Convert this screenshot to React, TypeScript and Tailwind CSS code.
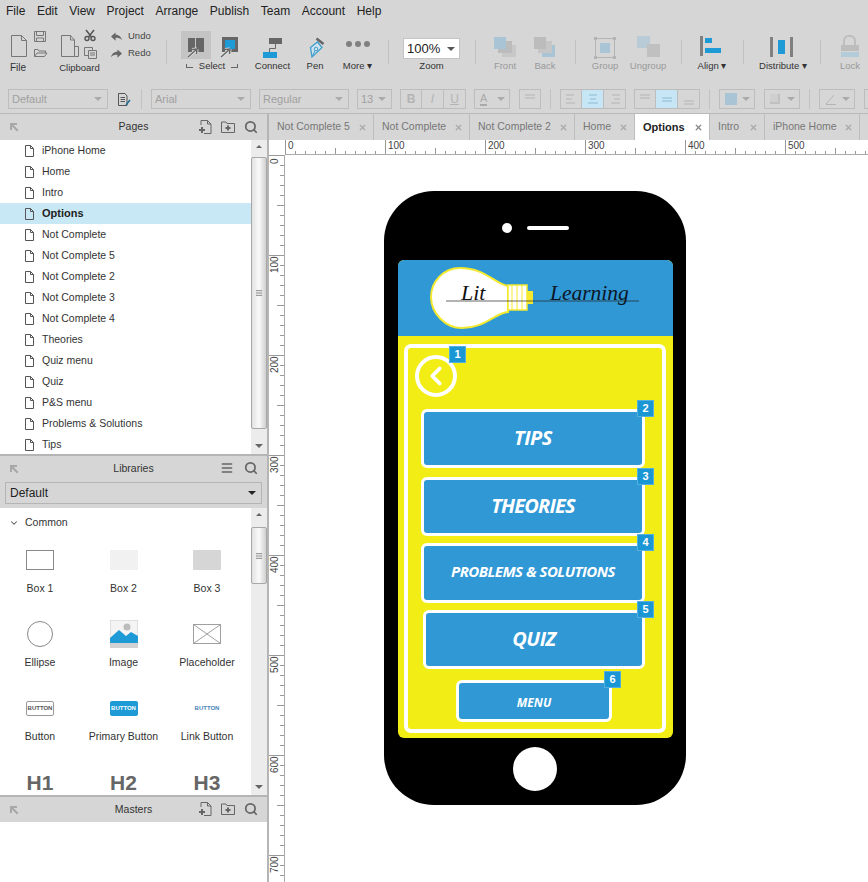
import type { ReactNode } from 'react';
import { ChevronDown, Search, Menu, X, ChevronLeft } from 'lucide-react';

const PAGES = ['iPhone Home', 'Home', 'Intro', 'Options', 'Not Complete', 'Not Complete 5', 'Not Complete 2', 'Not Complete 3', 'Not Complete 4', 'Theories', 'Quiz menu', 'Quiz', 'P&S menu', 'Problems & Solutions', 'Tips'];
const MENU = ['File', 'Edit', 'View', 'Project', 'Arrange', 'Publish', 'Team', 'Account', 'Help'];
const TABS = [
  { name: 'Not Complete 5', w: 'w-[105px]' },
  { name: 'Not Complete', w: 'w-[96px]' },
  { name: 'Not Complete 2', w: 'w-[105px]' },
  { name: 'Home', w: 'w-[60px]' },
  { name: 'Options', w: 'w-[75px]', active: true },
  { name: 'Intro', w: 'w-[55px]' },
  { name: 'iPhone Home', w: 'w-[95px]' },
];

function Sep({ className }: { className: string }) {
  return <div className={`w-px h-[24px] mt-[18px] bg-[#c2c2c2] shrink-0 ${className}`} />;
}

function Tool({ className, label, dim, labelClass = '', children }: { className: string; label: string; dim?: boolean; labelClass?: string; children: ReactNode }) {
  return (
    <div className={`flex flex-col items-center shrink-0 ${className}`}>
      <div className="h-[37px] w-full flex justify-center">{children}</div>
      <div className={`text-[9.5px] leading-[14px] whitespace-nowrap ${dim ? 'text-[#999]' : 'text-[#333]'} ${labelClass}`}>{label}</div>
    </div>
  );
}

function PageIcon({ className = 'w-[9px] h-[12px]' }: { className?: string }) {
  return (
    <svg viewBox="0 0 9 12" className={className} fill="none" stroke="#555" strokeWidth="1">
      <path d="M0.5 0.5H5.5L8.5 3.5V11.5H0.5Z M5.5 0.5V3.5H8.5" />
    </svg>
  );
}

function HeaderActions() {
  return (
    <div className="flex items-center gap-[9px] text-[#666]">
      <svg viewBox="0 0 14 14" className="w-[14px] h-[14px]" fill="none" stroke="#666" strokeWidth="1">
        <path d="M3 5V0.5H9.5L13 4V13.5H6M9.5 0.5V4H13" />
        <path d="M4 7V13M1 10H7" strokeWidth="2" />
      </svg>
      <svg viewBox="0 0 14 12" className="w-[14px] h-[12px]" fill="none" stroke="#666" strokeWidth="1">
        <path d="M0.5 11.5V1H5L6 2.5H13.5V11.5Z" />
        <path d="M7 4.5V9.5M4.5 7H9.5" strokeWidth="2" />
      </svg>
      <Search className="w-[14px] h-[14px]" strokeWidth={3} />
    </div>
  );
}

function PinIcon() {
  return (
    <svg viewBox="0 0 9 9" className="w-[9px] h-[9px]" fill="#a8a8a8">
      <path d="M0 0H7V2H3.5L8.5 7L7 8.5L2 3.5V7H0Z" />
    </svg>
  );
}

function Select({ className, label }: { className: string; label: string }) {
  return (
    <div className={`h-[20px] border border-[#bdbdbd] flex items-center justify-between pl-[3px] pr-[5px] shrink-0 text-[#a0a0a0] text-[11px] ${className}`}>
      <span>{label}</span>
      <span className="w-0 h-0 border-x-[4px] border-x-transparent border-t-[4px] border-t-[#aaa]" />
    </div>
  );
}

function FmtBtn({ on, children }: { on?: boolean; children?: ReactNode }) {
  return (
    <div className={`w-[22px] h-[20px] flex items-center justify-center border border-l-0 first:border-l border-[#bdbdbd] shrink-0 ${on ? 'bg-[#c6e6f6]' : ''}`}>
      {children}
    </div>
  );
}

function Lines({ kind }: { kind: 'l' | 'c' | 'r' | 't' | 'm' | 'b' }) {
  const blue = kind === 'c' || kind === 'm';
  const stroke = blue ? '#8cb9cf' : '#b4b4b4';
  if (kind === 't' || kind === 'm' || kind === 'b') {
    const y = kind === 't' ? 2 : kind === 'm' ? 5 : 8;
    return (
      <svg viewBox="0 0 12 12" className="w-[12px] h-[12px]" stroke={stroke} strokeWidth="1.2">
        <path d={`M1 ${y}H11M1 ${y + 3}H11`} />
      </svg>
    );
  }
  const a = kind === 'l' ? 'M1 2H9M1 6H7M1 10H10' : kind === 'c' ? 'M2 2H10M3 6H9M1 10H11' : 'M3 2H11M5 6H11M2 10H11';
  return (
    <svg viewBox="0 0 12 12" className="w-[12px] h-[12px]" stroke={stroke} strokeWidth="1.2">
      <path d={a} />
    </svg>
  );
}

function Swatch({ className, children }: { className: string; children: ReactNode }) {
  return (
    <div className={`h-[20px] w-[36px] border border-[#bdbdbd] flex items-center justify-between pl-[5px] pr-[4px] shrink-0 ${className}`}>
      {children}
      <span className="w-0 h-0 border-x-[4px] border-x-transparent border-t-[4px] border-t-[#aaa]" />
    </div>
  );
}

function Toolbar() {
  return (
    <div className="h-[62px] flex shrink-0">
      <Tool className="ml-[6px] w-[44px] !items-start" label="File" labelClass="mt-[2px] ml-[4px] text-[10px]">
        <svg width="44" height="37" viewBox="6 22 44 37" fill="none" stroke="#777" strokeWidth="1">
          <path d="M11.5 35.5H21.5L26.5 40.5V56.5H11.5Z M21.5 35.5V40.5H26.5" />
          <path d="M34.5 31.5H45.5V41.5H34.5Z M36.5 31.5V35.5H43.5V31.5M36.5 41.5V38H43.5V41.5" />
          <path d="M34.5 56.5V49.5H38L39 51H45.5V53M34.5 56.5H44.5L47 53H37Z" />
        </svg>
      </Tool>
      <Tool className="ml-[6px] w-[47px]" label="Clipboard" labelClass="mt-[2px]">
        <svg width="47" height="37" viewBox="56 22 47 37" fill="none" stroke="#777" strokeWidth="1">
          <path d="M61.5 35.5H70.5L74.5 40V56.5H61.5Z M70.5 35.5V40H74.5" />
          <path d="M74.5 46.5H78.5V56.5H74.5" />
          <circle cx="87" cy="38.5" r="2" stroke="#555" strokeWidth="1.4" />
          <circle cx="93" cy="38.5" r="2" stroke="#555" strokeWidth="1.4" />
          <path d="M86 30L91.5 37M94 30L88.5 37" stroke="#555" strokeWidth="1.5" />
          <path d="M84.5 47.5H92.5V50M88.5 50.5H96.5V58.5H88.5ZM88.5 55.5H84.5V47.5M90 53H95M90 55H95" />
        </svg>
      </Tool>
      <div className="ml-[8px] w-[44px] pt-[7px] flex flex-col gap-[3px] shrink-0">
        <div className="flex items-center gap-[6px] h-[14px]">
          <svg viewBox="0 0 12 9" className="w-[11px] h-[9px]" fill="#666"><path d="M0 4.5L5 0V2.5C8 2.5 11 4 12 8.5C10 6 8 5.8 5 5.8V9Z" /></svg>
          <span className="text-[9.5px] text-[#444]">Undo</span>
        </div>
        <div className="flex items-center gap-[6px] h-[14px]">
          <svg viewBox="0 0 12 9" className="w-[11px] h-[9px]" fill="#666"><path d="M12 4.5L7 0V2.5C4 2.5 1 4 0 8.5C2 6 4 5.8 7 5.8V9Z" /></svg>
          <span className="text-[9.5px] text-[#444]">Redo</span>
        </div>
      </div>
      <Sep className="ml-[11px]" />
      <div className="ml-[14px] w-[62px] shrink-0 flex flex-col">
        <svg width="62" height="37" viewBox="181 22 62 37">
          <rect x="181" y="31" width="30" height="28" fill="#c4c4c4" />
          <rect x="188" y="38" width="7" height="14" fill="#666" />
          <rect x="196" y="38" width="8" height="14" fill="#666" />
          <path d="M188 57L197 49M197 49L192 49.5M197 49L196.5 54" stroke="#e4e4e4" strokeWidth="3" fill="none" />
          <path d="M188 57L197 49M197 49L192 49.5M197 49L196.5 54" stroke="#666" strokeWidth="1.5" fill="none" />
          <rect x="222" y="37" width="16" height="15" fill="#666" />
          <rect x="225" y="40" width="10" height="9" fill="#1e9ad6" />
          <path d="M221 57L230 49M230 49L225 49.5M230 49L229.5 54" stroke="#e4e4e4" strokeWidth="3" fill="none" />
          <path d="M221 57L230 49M230 49L225 49.5M230 49L229.5 54" stroke="#666" strokeWidth="1.5" fill="none" />
        </svg>
        <div className="flex items-center justify-between text-[9.5px] leading-[14px] text-[#333] px-[5px]">
          <span className="w-[7px] h-[4px] border-l border-b border-[#666]" />
          <span>Select</span>
          <span className="w-[7px] h-[4px] border-r border-b border-[#666]" />
        </div>
      </div>
      <Tool className="ml-[12px] w-[35px]" label="Connect">
        <svg width="35" height="37" viewBox="255 22 35 37">
          <rect x="269" y="38" width="13" height="6" fill="#666" />
          <path d="M275.5 44V48.5H269.5V52" stroke="#666" fill="none" />
          <rect x="263" y="52" width="14" height="6" fill="#1e9ad6" />
        </svg>
      </Tool>
      <Tool className="ml-[10px] w-[30px]" label="Pen">
        <svg width="30" height="37" viewBox="300 22 30 37" fill="none">
          <path d="M312 57L310.5 47.5L317.5 42L322 47.5Z" stroke="#3f9fcc" strokeWidth="1.3" fill="#cfe3ee" />
          <circle cx="316" cy="49" r="1.8" stroke="#3f9fcc" />
          <path d="M312 57L315 50.5" stroke="#3f9fcc" />
          <path d="M316.5 38.5L323.5 44" stroke="#666" strokeWidth="2.5" />
        </svg>
      </Tool>
      <Tool className="ml-[10px] w-[35px]" label="More ▾">
        <div className="flex gap-[3px] pt-[19px]">
          <span className="w-[6px] h-[6px] rounded-full bg-[#808080]" />
          <span className="w-[6px] h-[6px] rounded-full bg-[#808080]" />
          <span className="w-[6px] h-[6px] rounded-full bg-[#808080]" />
        </div>
      </Tool>
      <Sep className="ml-[13px]" />
      <div className="ml-[14px] w-[57px] shrink-0 flex flex-col items-center">
        <div className="mt-[16px] h-[21px] w-[57px] bg-white border border-[#c4c4c4] flex items-center justify-between pl-[3px] pr-[4px] text-[13px] text-[#222]">
          <span>100%</span>
          <span className="w-0 h-0 border-x-[4px] border-x-transparent border-t-[4px] border-t-[#555]" />
        </div>
        <div className="text-[9.5px] leading-[14px] text-[#333]">Zoom</div>
      </div>
      <Sep className="ml-[15px]" />
      <Tool className="ml-[14px] w-[30px]" label="Front" dim>
        <svg width="30" height="37" viewBox="490 22 30 37">
          <rect x="502" y="45" width="14" height="12" fill="#c8c8c8" />
          <rect x="498" y="41" width="14" height="12" fill="#bcbcbc" />
          <rect x="494" y="37" width="12" height="12" fill="#a9c4d4" />
        </svg>
      </Tool>
      <Tool className="ml-[10px] w-[30px]" label="Back" dim>
        <svg width="30" height="37" viewBox="530 22 30 37">
          <rect x="542" y="45" width="13" height="12" fill="#a9c4d4" />
          <rect x="538" y="41" width="14" height="12" fill="#c6c6c6" />
          <rect x="534" y="37" width="12" height="12" fill="#bcbcbc" />
        </svg>
      </Tool>
      <Sep className="ml-[15px]" />
      <Tool className="ml-[14px] w-[30px]" label="Group" dim>
        <svg width="30" height="37" viewBox="590 22 30 37">
          <rect x="595.5" y="38.5" width="19" height="19" fill="none" stroke="#b4b4b4" />
          <rect x="594" y="37" width="3" height="3" fill="#b4b4b4" />
          <rect x="613" y="37" width="3" height="3" fill="#b4b4b4" />
          <rect x="594" y="56" width="3" height="3" fill="#b4b4b4" />
          <rect x="613" y="56" width="3" height="3" fill="#b4b4b4" />
          <rect x="600" y="43" width="10" height="10" fill="#a9c4d4" />
        </svg>
      </Tool>
      <Tool className="ml-[10px] w-[36px]" label="Ungroup" dim>
        <svg width="36" height="37" viewBox="630 22 36 37">
          <rect x="637" y="36" width="13" height="12" fill="#b9cbd6" />
          <rect x="647" y="44" width="13" height="13" fill="#c0c0c0" />
        </svg>
      </Tool>
      <Sep className="ml-[15px]" />
      <Tool className="ml-[14px] w-[32px]" label="Align ▾">
        <svg width="32" height="37" viewBox="696 22 32 37">
          <rect x="700" y="36" width="3" height="20" fill="#808080" />
          <rect x="705" y="38" width="7" height="5" fill="#1e9ad6" />
          <rect x="705" y="48" width="16" height="5" fill="#1e9ad6" />
        </svg>
      </Tool>
      <Sep className="ml-[15px]" />
      <Tool className="ml-[14px] w-[50px]" label="Distribute ▾">
        <svg width="50" height="37" viewBox="758 22 50 37">
          <rect x="770" y="37" width="3" height="20" fill="#808080" />
          <rect x="790" y="37" width="3" height="20" fill="#808080" />
          <rect x="778" y="40" width="7" height="14" fill="#1e9ad6" />
        </svg>
      </Tool>
      <Sep className="ml-[12px]" />
      <Tool className="ml-[14px] w-[30px]" label="Lock" dim>
        <svg width="30" height="37" viewBox="835 22 30 37" fill="none">
          <path d="M844 45V41C844 34 855 34 855 41V45" stroke="#bdbdbd" strokeWidth="2" />
          <rect x="841" y="45" width="18" height="6" fill="#bdbdbd" />
          <rect x="841" y="52" width="18" height="5" fill="#b4cbd9" />
        </svg>
      </Tool>
    </div>
  );
}

function FormatBar() {
  return (
    <div className="h-[30px] pt-[5px] flex items-start border-b border-[#b9b9b9] shrink-0 overflow-hidden">
      <Select className="ml-[8px] w-[100px]" label="Default" />
      <svg viewBox="0 0 14 13" className="w-[14px] h-[13px] ml-[9px] mt-[4px] shrink-0" fill="none" stroke="#555">
        <path d="M1.5 0.5H8L10 3V12.5H1.5Z M3.5 4.5H8M3.5 6.5H8M3.5 8.5H8" />
        <path d="M9 12L13 7" stroke="#1e6e96" strokeWidth="1.5" />
      </svg>
      <div className="w-px h-[20px] ml-[10px] bg-[#c2c2c2] shrink-0" />
      <Select className="ml-[9px] w-[100px]" label="Arial" />
      <Select className="ml-[8px] w-[90px]" label="Regular" />
      <Select className="ml-[8px] w-[35px]" label="13" />
      <div className="flex ml-[8px]">
        <FmtBtn><span className="text-[12px] font-bold text-[#b4b4b4]">B</span></FmtBtn>
        <FmtBtn><span className="text-[12px] italic text-[#b4b4b4]">I</span></FmtBtn>
        <FmtBtn><span className="text-[12px] underline text-[#b4b4b4]">U</span></FmtBtn>
      </div>
      <Swatch className="ml-[8px]">
        <span className="text-[11px] leading-[11px] text-[#aaa] border-b-2 border-[#aaa]">A</span>
      </Swatch>
      <div className="ml-[9px] w-[22px] h-[20px] border border-[#bdbdbd] flex items-center justify-center shrink-0">
        <Lines kind="t" />
      </div>
      <div className="w-px h-[20px] ml-[9px] bg-[#c2c2c2] shrink-0" />
      <div className="flex ml-[9px]">
        <FmtBtn><Lines kind="l" /></FmtBtn>
        <FmtBtn on><Lines kind="c" /></FmtBtn>
        <FmtBtn><Lines kind="r" /></FmtBtn>
      </div>
      <div className="flex ml-[8px]">
        <FmtBtn><Lines kind="t" /></FmtBtn>
        <FmtBtn on><Lines kind="m" /></FmtBtn>
        <FmtBtn><Lines kind="b" /></FmtBtn>
      </div>
      <div className="w-px h-[20px] ml-[9px] bg-[#c2c2c2] shrink-0" />
      <Swatch className="ml-[9px]"><span className="w-[12px] h-[12px] bg-[#a9c4d4]" /></Swatch>
      <Swatch className="ml-[9px]"><span className="w-[10px] h-[10px] bg-[#cfcfcf] border-r-2 border-b-2 border-[#c0c0c0]" /></Swatch>
      <div className="w-px h-[20px] ml-[9px] bg-[#c2c2c2] shrink-0" />
      <Swatch className="ml-[9px]">
        <svg viewBox="0 0 12 12" className="w-[12px] h-[12px]" stroke="#b4b4b4" fill="none"><path d="M1 11L9 2M1 11.5H11" /></svg>
      </Swatch>
      <div className="ml-[9px] w-[22px] h-[20px] border border-[#bdbdbd] shrink-0" />
    </div>
  );
}

function ScrollTrack({ className, thumb }: { className: string; thumb: string }) {
  return (
    <div className={`w-[16px] bg-[#ececec] flex flex-col items-center shrink-0 relative ${className}`}>
      <span className="mt-[5px] w-0 h-0 border-x-[3px] border-x-transparent border-b-[3px] border-b-[#666]" />
      <div className={`absolute left-0 w-[16px] rounded-[2px] border border-[#a8a8a8] bg-gradient-to-r from-[#e2e2e2] via-[#fafafa] to-[#d0d0d0] flex items-center justify-center ${thumb}`}>
        <Menu className="w-[8px] h-[8px] text-[#555]" strokeWidth={2} />
      </div>
      <span className="mt-auto mb-[6px] w-0 h-0 border-x-[4px] border-x-transparent border-t-[4px] border-t-[#666]" />
    </div>
  );
}

function PagesPanel() {
  return (
    <>
      <div className="h-[26px] bg-[#d6d6d6] relative flex items-center justify-center shrink-0">
        <div className="absolute left-[10px] top-[9px]"><PinIcon /></div>
        <span className="text-[10.5px] text-[#333]">Pages</span>
        <div className="absolute right-[9px] top-[6px]"><HeaderActions /></div>
      </div>
      <div className="h-[314px] flex shrink-0 overflow-hidden">
        <div className="flex-1">
          {PAGES.map(p => (
            <div key={p} className={`h-[21px] flex items-center pl-[25px] gap-[8px] ${p === 'Options' ? 'bg-[#c9e8f5] font-bold text-[11px] text-[#222]' : 'text-[10.5px] text-[#333]'}`}>
              <PageIcon />
              <span>{p}</span>
            </div>
          ))}
        </div>
        <ScrollTrack className="h-[314px]" thumb="top-[17px] h-[272px]" />
      </div>
    </>
  );
}

function LibCell({ label, children }: { label: string; children: ReactNode }) {
  return (
    <div className="h-[74px] flex flex-col items-center">
      <div className="h-[38px] flex items-center justify-center">{children}</div>
      <div className="text-[10.5px] leading-[14px] mt-[2px] text-[#333] whitespace-nowrap">{label}</div>
    </div>
  );
}

function LibrariesPanel() {
  return (
    <>
      <div className="h-[2px] bg-[#b5b5b5] shrink-0" />
      <div className="h-[52px] bg-[#d6d6d6] relative shrink-0">
        <div className="h-[26px] flex items-center justify-center relative">
          <div className="absolute left-[10px] top-[9px]"><PinIcon /></div>
          <span className="text-[10.5px] text-[#333]">Libraries</span>
          <Menu className="absolute right-[33px] top-[5px] w-[14px] h-[14px] text-[#666]" strokeWidth={2.5} />
          <Search className="absolute right-[9px] top-[5px] w-[14px] h-[14px] text-[#666]" strokeWidth={3} />
        </div>
        <div className="mx-[5px] h-[22px] border border-[#b5b5b5] flex items-center justify-between pl-[4px] pr-[5px] text-[12px] text-[#222]">
          <span>Default</span>
          <span className="w-0 h-0 border-x-[4px] border-x-transparent border-t-[4px] border-t-[#222]" />
        </div>
      </div>
      <div className="h-[287px] flex shrink-0 overflow-hidden">
        <div className="flex-1 overflow-hidden">
          <div className="h-[30px] flex items-center pl-[9px] gap-[6px] text-[10.5px] text-[#333]">
            <ChevronDown className="w-[10px] h-[10px] text-[#555]" strokeWidth={2.5} />
            <span>Common</span>
          </div>
          <div className="grid grid-cols-[80px_87px_80px] mt-[3px]">
            <LibCell label="Box 1"><div className="w-[28px] h-[20px] border border-[#888]" /></LibCell>
            <LibCell label="Box 2"><div className="w-[28px] h-[20px] bg-[#f1f1f1]" /></LibCell>
            <LibCell label="Box 3"><div className="w-[28px] h-[20px] bg-[#d6d6d6]" /></LibCell>
            <LibCell label="Ellipse"><div className="w-[26px] h-[26px] rounded-full border border-[#888]" /></LibCell>
            <LibCell label="Image">
              <svg viewBox="0 0 28 28" className="w-[28px] h-[28px]">
                <rect width="28" height="28" fill="#f4f4f4" stroke="#ccc" />
                <circle cx="17" cy="7" r="3.5" fill="#bcbcbc" />
                <path d="M0 18L9 10L16 16L21 12L28 16V24H0Z" fill="#1e9ad6" />
                <rect y="23" width="28" height="5" fill="#d2d2d2" />
              </svg>
            </LibCell>
            <LibCell label="Placeholder">
              <svg viewBox="0 0 28 20" className="w-[28px] h-[20px]" fill="none" stroke="#888" strokeWidth="0.8">
                <path d="M0.5 0.5H27.5V19.5H0.5Z M0.5 0.5L27.5 19.5M27.5 0.5L0.5 19.5" />
              </svg>
            </LibCell>
            <LibCell label="Button">
              <div className="w-[28px] h-[15px] border border-[#999] rounded-[2px] text-[6px] font-bold text-[#555] flex items-center justify-center">BUTTON</div>
            </LibCell>
            <LibCell label="Primary Button">
              <div className="w-[28px] h-[15px] bg-[#1e9ad6] rounded-[2px] text-[6px] font-bold text-white flex items-center justify-center">BUTTON</div>
            </LibCell>
            <LibCell label="Link Button">
              <div className="w-[28px] h-[15px] text-[6px] font-bold text-[#4a86b8] flex items-center justify-center">BUTTON</div>
            </LibCell>
            <LibCell label=""><span className="text-[21px] leading-none font-bold text-[#666]">H1</span></LibCell>
            <LibCell label=""><span className="text-[21px] leading-none font-bold text-[#666]">H2</span></LibCell>
            <LibCell label=""><span className="text-[21px] leading-none font-bold text-[#666]">H3</span></LibCell>
          </div>
        </div>
        <ScrollTrack className="h-[287px]" thumb="top-[19px] h-[57px]" />
      </div>
    </>
  );
}

function MastersPanel() {
  return (
    <>
      <div className="h-[2px] bg-[#b5b5b5] shrink-0" />
      <div className="h-[25px] bg-[#d6d6d6] relative flex items-center justify-center shrink-0">
        <div className="absolute left-[10px] top-[9px]"><PinIcon /></div>
        <span className="text-[10.5px] text-[#333]">Masters</span>
        <div className="absolute right-[9px] top-[5px]"><HeaderActions /></div>
      </div>
    </>
  );
}

function Rulers() {
  const hTicks = Array.from({ length: 59 }, (_, i) => i * 10);
  const vTicks = Array.from({ length: 73 }, (_, i) => i * 10);
  return (
    <>
      <svg width="583" height="15" className="absolute left-[16px] top-0 bg-white">
        {hTicks.map(t => (
          <line key={t} x1={t + 0.5} x2={t + 0.5} y1={t % 100 === 0 ? 0 : t % 50 === 0 ? 8 : 11} y2="15" stroke="#999" />
        ))}
        {[0, 100, 200, 300, 400, 500].map(t => (
          <text key={t} x={t + 3} y="9" fontSize="10" fill="#444" fontFamily="Liberation Sans">{t}</text>
        ))}
        <line x1="0" x2="583" y1="14.5" y2="14.5" stroke="#aaa" />
      </svg>
      <svg width="16" height="727" className="absolute left-0 top-[15px] bg-white">
        {vTicks.map(t => (
          <line key={t} y1={t + 0.5} y2={t + 0.5} x1={t % 100 === 0 ? 0 : t % 50 === 0 ? 8 : 11} x2="16" stroke="#999" />
        ))}
        {[0, 100, 200, 300, 400, 500, 600, 700].map(t => (
          <text key={t} transform={`translate(9 ${t + (t === 0 ? 9 : 18)}) rotate(-90)`} fontSize="10" fill="#444" fontFamily="Liberation Sans">{t}</text>
        ))}
        <line x1="15.5" x2="15.5" y1="0" y2="727" stroke="#aaa" />
      </svg>
    </>
  );
}

function Badge({ n, className }: { n: number; className: string }) {
  return (
    <div className={`absolute w-[17px] h-[17px] bg-[#1a96d4] border border-white/25 text-white text-[11px] not-italic font-bold font-['Liberation_Sans',sans-serif] flex items-center justify-center ${className}`}>
      {n}
    </div>
  );
}

function PhoneButton({ label, n, className, text }: { label: string; n: number; className: string; text: string }) {
  return (
    <div className={`relative border-[3px] border-white rounded-[6px] bg-[#3098d5] flex items-center justify-center text-white italic font-bold font-['Open_Sans',sans-serif] ${className}`}>
      <span className={text}>{label}</span>
      <Badge n={n} className="-top-[12px] -right-[12px]" />
    </div>
  );
}

function Phone() {
  return (
    <div className="absolute left-[115px] top-[51px] w-[302px] h-[614px] bg-black rounded-[50px] flex flex-col">
      <div className="h-[69px] flex items-center pl-[118px] gap-[15px] pt-[4px] shrink-0">
        <span className="w-[10px] h-[10px] rounded-full bg-white" />
        <span className="w-[42px] h-[4px] rounded-full bg-white" />
      </div>
      <div className="ml-[14px] w-[275px] h-[478px] rounded-[6px] overflow-hidden bg-[#f2ee15] flex flex-col shrink-0">
        <div className="h-[76px] bg-[#3098d5] shrink-0">
          <svg width="275" height="76" viewBox="398 260 275 76">
            <path d="M508 286C495 284 485 268 460 268C443 268 431 282 431 297C431 313 445 328 462 328C485 328 495 313 508 312Z" fill="#fff" stroke="#f4e92e" strokeWidth="2" />
            <path d="M508 285H527V310H508Z" fill="#fff" stroke="#f4e92e" strokeWidth="1.5" />
            <path d="M512 285V310M517 285V310M522 285V310" stroke="#f4e92e" strokeWidth="1" />
            <path d="M527 291H533V304H527Z" fill="#f4e92e" />
            <text x="461" y="300" fontFamily="Liberation Serif" fontStyle="italic" fontSize="22" fill="#111">Lit</text>
            <text x="550" y="300" fontFamily="Liberation Serif" fontStyle="italic" fontSize="21.5" fill="#0b1626">Learning</text>
            <line x1="446" x2="639" y1="301" y2="301" stroke="#222" strokeWidth="0.7" />
          </svg>
        </div>
        <div className="ml-[6px] mt-[8px] w-[262px] h-[389px] border-[4px] border-white rounded-[7px] relative shrink-0 flex flex-col pl-[13px]">
          <div className="relative ml-[-6px] mt-[7px] w-[42px] h-[42px] rounded-full border-[4px] border-white flex items-center justify-center shrink-0">
            <ChevronLeft className="w-[30px] h-[30px] text-white shrink-0" strokeWidth={3} />
            <Badge n={1} className="-top-[13px] -right-[13px]" />
          </div>
          <PhoneButton label="TIPS" n={2} className="mt-[12px] w-[224px] h-[59px] pb-[2px]" text="text-[20px] tracking-[-0.5px]" />
          <PhoneButton label="THEORIES" n={3} className="mt-[9px] w-[224px] h-[59px] pb-[2px]" text="text-[20px] tracking-[-0.8px]" />
          <PhoneButton label="PROBLEMS & SOLUTIONS" n={4} className="mt-[7px] w-[224px] h-[60px] pb-[3px]" text="text-[15px] tracking-[-0.5px]" />
          <PhoneButton label="QUIZ" n={5} className="mt-[7px] ml-[2px] w-[222px] h-[59px] pb-[2px]" text="text-[20px] tracking-[-0.5px]" />
          <PhoneButton label="MENU" n={6} className="mt-[11px] ml-[35px] w-[156px] h-[42px] pt-[3px]" text="text-[12px]" />
        </div>
      </div>
      <span className="ml-[129px] mt-[9px] w-[44px] h-[44px] rounded-full bg-white shrink-0" />
    </div>
  );
}

export default function App() {
  return (
    <div className="w-[868px] h-[882px] bg-white overflow-hidden flex flex-col font-['Liberation_Sans',Arial,sans-serif]">
      <div className="bg-[#d6d6d6] flex flex-col shrink-0">
        <div className="h-[22px] flex items-center pl-[6px] gap-[11.6px] text-[12px] text-[#222] shrink-0">
          {MENU.map(m => <span key={m}>{m}</span>)}
        </div>
        <Toolbar />
        <FormatBar />
      </div>
      <div className="flex-1 flex min-h-0">
        <div className="w-[269px] border-r-2 border-[#b5b5b5] flex flex-col shrink-0">
          <PagesPanel />
          <LibrariesPanel />
          <MastersPanel />
        </div>
        <div className="flex-1 flex flex-col min-w-0">
          <div className="h-[26px] bg-[#d6d6d6] flex shrink-0">
            {TABS.map(t => (
              <div key={t.name} className={`${t.w} shrink-0 flex items-center justify-between pl-[8px] pr-[6px] border-r border-[#bdbdbd] ${t.active ? 'bg-white font-bold text-[11px] text-[#222]' : 'text-[10.5px] text-[#777]'}`}>
                <span className="whitespace-nowrap">{t.name}</span>
                <X className={`w-[9px] h-[9px] shrink-0 ${t.active ? 'text-[#888]' : 'text-[#aaa]'}`} strokeWidth={3.5} />
              </div>
            ))}
          </div>
          <div className="flex-1 relative overflow-hidden bg-white">
            <Rulers />
            <Phone />
          </div>
        </div>
      </div>
    </div>
  );
}
